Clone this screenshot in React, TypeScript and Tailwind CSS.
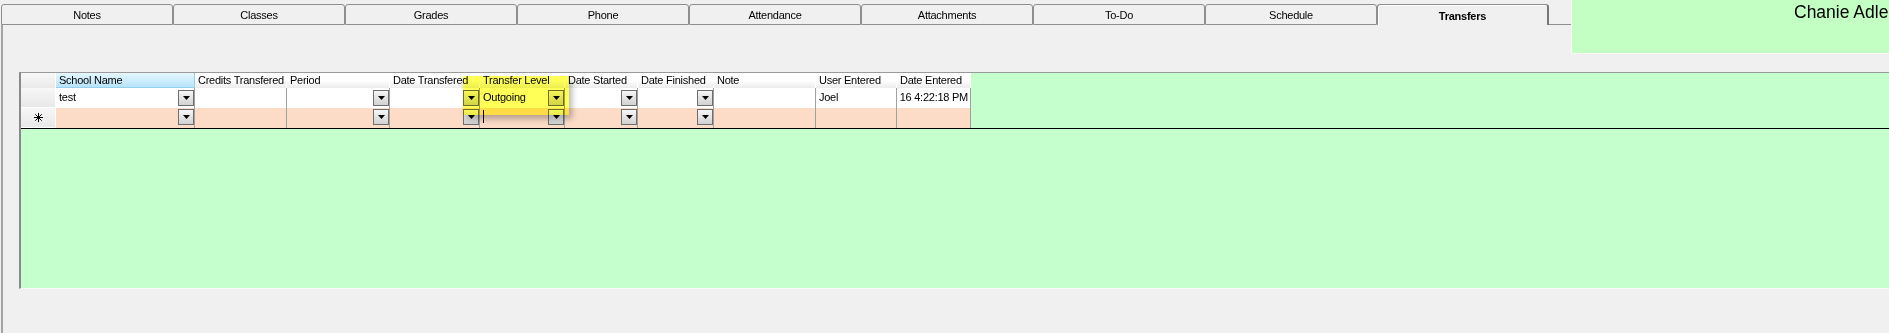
import React from "react";

const TABS = ["Notes", "Classes", "Grades", "Phone", "Attendance", "Attachments", "To-Do", "Schedule"];

const COLUMNS = [
  { name: "School Name", w: "w-[139px]", drop: true },
  { name: "Credits Transfered", w: "w-[92px]", drop: false },
  { name: "Period", w: "w-[103px]", drop: true },
  { name: "Date Transfered", w: "w-[90px]", drop: true },
  { name: "Transfer Level", w: "w-[85px]", drop: true },
  { name: "Date Started", w: "w-[73px]", drop: true },
  { name: "Date Finished", w: "w-[76px]", drop: true },
  { name: "Note", w: "w-[102px]", drop: false },
  { name: "User Entered", w: "w-[81px]", drop: false },
  { name: "Date Entered", w: "w-[74px]", drop: false },
];

const ROW1: Record<string, string> = {
  "School Name": "test",
  "Transfer Level": "Outgoing",
  "User Entered": "Joel",
};

function DropBtn({ top }: { top: string }) {
  return (
    <div
      className={`absolute right-0 ${top} w-[16px] h-[16px] border border-[#6e6e6e] bg-gradient-to-b from-[#f6f6f6] to-[#d2d2d2] flex items-center justify-center`}
    >
      <svg width="7" height="4" viewBox="0 0 7 4">
        <path d="M0 0h7L3.5 4z" fill="#000" />
      </svg>
    </div>
  );
}

function NewRowGlyph() {
  return (
    <svg width="9" height="9" viewBox="0 0 9 9" stroke="#000" strokeWidth="1">
      <path d="M4.5 0v9M0 4.5h9M1.3 1.3l6.4 6.4M7.7 1.3l-6.4 6.4" />
    </svg>
  );
}

export default function App() {
  return (
    <div className="relative w-[1889px] h-[333px] overflow-hidden bg-[#f0f0f0] text-[11px] tracking-[-0.25px] text-black font-['Liberation_Sans',Arial,sans-serif]">
      {/* tab strip */}
      <div className="flex items-start h-[25px] pt-[4px] pl-[1px]">
        {TABS.map((t) => (
          <div
            key={t}
            className="w-[172px] h-[21px] shrink-0 border border-[#8e8e8e] rounded-t-[3px] bg-[#f0f0f0] flex items-center justify-center leading-[16px]"
          >
            {t}
          </div>
        ))}
        <div className="w-[172px] h-[21px] shrink-0 border-t border-l border-r-2 border-[#8e8e8e] border-r-[#777] rounded-t-[3px] bg-[#f0f0f0] shadow-[inset_1px_1px_0_#ffffff] flex items-center justify-center pt-[2px] font-bold leading-[16px]">
          Transfers
        </div>
        <div className="w-[22px] h-[21px] shrink-0 border-b border-[#8e8e8e]" />
      </div>

      {/* tab page body */}
      <div className="ml-[1px] h-[308px] border-l-2 border-[#a3a3a3] pt-[47px] pl-[16px]">
        <div className="relative w-[1870px] h-[217px] border-t border-[#9a9a9a] border-l-2 border-l-[#8a8a8a] border-b border-b-[#fbfbfb] bg-[#c4ffcd]">
          <div className="border-b border-black">
            {/* header row */}
            <div className="flex h-[15px]">
              <div className="w-[35px] shrink-0 bg-gradient-to-b from-[#f8f8f8] to-[#e9e9e9] border-r border-white" />
              {COLUMNS.map((c, i) => (
                <div
                  key={c.name}
                  className={`${c.w} shrink-0 pl-[3px] leading-[15px] whitespace-nowrap overflow-hidden ${
                    i === 0
                      ? "bg-gradient-to-b from-[#e6f7fe] to-[#b7e3f8] border-r border-b border-[#96d1ee]"
                      : "bg-gradient-to-b from-white from-50% to-[#ececec] border-r border-white"
                  }`}
                >
                  {c.name}
                </div>
              ))}
            </div>

            {/* row 1 */}
            <div className="flex h-[20px]">
              <div className="w-[35px] shrink-0 bg-gradient-to-b from-[#f7f7f7] to-[#e8e8e8] border-r border-b border-white" />
              {COLUMNS.map((c) => (
                <div
                  key={c.name}
                  className={`relative ${c.w} shrink-0 bg-white border-r border-[#a0a0a0] pl-[3px] pt-[1px] leading-[16px] whitespace-nowrap overflow-hidden`}
                >
                  {c.name === "Date Entered" ? (
                    <div className="flex justify-end pr-[2px]">
                      <span>16 4:22:18 PM</span>
                    </div>
                  ) : (
                    ROW1[c.name] ?? ""
                  )}
                  {c.drop && <DropBtn top="top-[2px]" />}
                </div>
              ))}
            </div>

            {/* row 2 - new row */}
            <div className="flex h-[20px]">
              <div className="w-[35px] shrink-0 bg-gradient-to-b from-[#f7f7f7] to-[#e8e8e8] border-r border-b border-white flex items-center justify-center">
                <NewRowGlyph />
              </div>
              {COLUMNS.map((c) => (
                <div
                  key={c.name}
                  className={`relative ${c.w} shrink-0 bg-[#fddcc7] border-r border-[#a0a0a0] pl-[3px]`}
                >
                  {c.name === "Transfer Level" && <div className="w-px h-[13px] mt-[2px] bg-black" />}
                  {c.drop && <DropBtn top="top-[1px]" />}
                </div>
              ))}
            </div>
          </div>
        </div>
      </div>

      {/* highlighter mark over Transfer Level column */}
      <div className="absolute left-[463px] top-[76px] w-[106px] h-[39px] bg-[#ffff58] mix-blend-multiply shadow-[3px_4px_6px_rgba(0,0,0,0.28)]" />

      {/* student name panel */}
      <div className="absolute left-[1571px] top-0 w-[318px] h-[54px] bg-[#c3fec3] border-l border-b border-[#f8f8f8] pl-[222px] pt-[2px] text-[17.5px] tracking-normal leading-[20px] whitespace-nowrap overflow-hidden font-['Liberation_Sans',Arial,sans-serif]">
        Chanie Adler
      </div>
    </div>
  );
}
